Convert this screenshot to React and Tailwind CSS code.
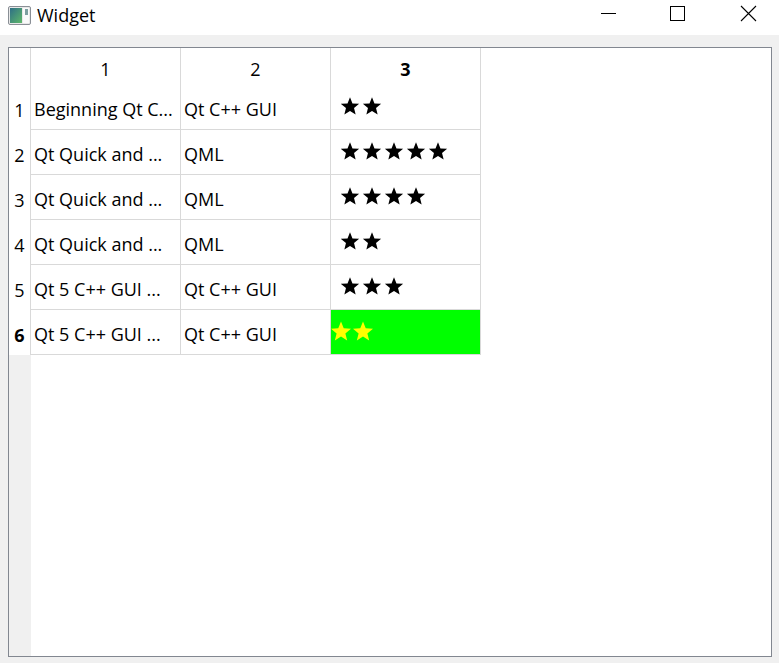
import React from "react";

const rows = [
  { t: "Beginning Qt C...", g: "Qt C++ GUI", s: 2 },
  { t: "Qt Quick and ...", g: "QML", s: 5 },
  { t: "Qt Quick and ...", g: "QML", s: 4 },
  { t: "Qt Quick and ...", g: "QML", s: 2 },
  { t: "Qt 5 C++ GUI ...", g: "Qt C++ GUI", s: 3 },
  { t: "Qt 5 C++ GUI ...", g: "Qt C++ GUI", s: 2, sel: true },
];

function starPoints(cx, cy, R) {
  const pts = [];
  for (let i = 0; i < 10; i++) {
    const r = i % 2 === 0 ? R : R * 0.44;
    const a = (-90 + i * 36) * (Math.PI / 180);
    pts.push(`${(cx + r * Math.cos(a)).toFixed(2)},${(cy + r * Math.sin(a)).toFixed(2)}`);
  }
  return pts.join(" ");
}

function Stars({ n, big, color }) {
  const pitch = 22;
  const R = big ? 10.5 : 9.6;
  const w = n * pitch;
  const h = big ? 20 : 18;
  const cy = big ? R + 0.5 : R + 0.2;
  return (
    <svg width={w} height={h} viewBox={`0 0 ${w} ${h}`} className="block">
      {Array.from({ length: n }).map((_, i) => (
        <polygon key={i} points={starPoints(i * pitch + (big ? 10 : 9), cy, R)} fill={color} />
      ))}
    </svg>
  );
}

export default function App() {
  return (
    <div
      className="w-[779px] h-[663px] flex flex-col bg-[#f0f0f0] text-black overflow-hidden"
      style={{ fontFamily: '"Open Sans", "Noto Sans", sans-serif' }}
    >
      {/* Title bar */}
      <div className="h-[35px] bg-white flex items-center relative shrink-0">
        <svg width="23" height="19" viewBox="0 0 23 19" className="ml-[8px] mt-[-4px]">
          <defs>
            <linearGradient id="ig" x1="0" y1="0" x2="1" y2="1">
              <stop offset="0" stopColor="#2e6f86" />
              <stop offset="1" stopColor="#5fb86a" />
            </linearGradient>
          </defs>
          <rect x="0.5" y="0.5" width="22" height="18" rx="1.5" fill="#e8e8e8" stroke="#8a8f96" />
          <rect x="2" y="2" width="12" height="15" fill="url(#ig)" />
          <rect x="15" y="2" width="6" height="15" fill="#fafafa" />
          <rect x="17" y="3" width="3" height="6" fill="#7d9ea0" />
        </svg>
        <span className="ml-[6px] text-[18px] leading-none mt-[-5px]">Widget</span>
        {/* caption buttons */}
        <div className="absolute left-[601px] top-[13px] w-[15px] h-px bg-black" />
        <div className="absolute left-[670px] top-[6px] w-[15px] h-[15px] border border-black" />
        <svg className="absolute left-[740px] top-[5px]" width="17" height="17" viewBox="0 0 17 17">
          <path d="M1 1 L16 16 M16 1 L1 16" stroke="#000" strokeWidth="1.1" />
        </svg>
      </div>

      {/* Body */}
      <div className="flex-1 flex pl-[8px] pt-[12px] pr-[7px] pb-[6px]">
        <div className="flex-1 border border-[#828790] bg-white flex flex-col text-[18px]">
          {/* horizontal header */}
          <div className="h-[37px] flex shrink-0">
            <div className="w-[22px] border-r border-[#d9d9d9]" />
            {["1", "2", "3"].map((h, i) => (
              <div
                key={h}
                className={`w-[150px] border-r border-[#d9d9d9] flex items-center justify-center pt-[5px] ${i === 2 ? "font-bold" : ""}`}
              >
                {h}
              </div>
            ))}
            <div className="flex-1" />
          </div>
          {rows.map((r, i) => (
            <div key={i} className="h-[45px] flex shrink-0">
              <div
                className={`w-[22px] border-r border-[#d9d9d9] flex items-center justify-center pt-[5px] ${r.sel ? "font-bold" : ""}`}
              >
                {i + 1}
              </div>
              <div className="w-[150px] border-r border-b border-[#d9d9d9] flex items-center px-[3px] pt-[5px] whitespace-nowrap overflow-hidden">
                {r.t}
              </div>
              <div className="w-[150px] border-r border-b border-[#d9d9d9] flex items-center px-[3px] pt-[5px] whitespace-nowrap overflow-hidden">
                {r.g}
              </div>
              {r.sel ? (
                <div className="w-[150px] border-r border-b border-[#d9d9d9] bg-[#00ff00] flex items-center pb-[3px]">
                  <Stars n={r.s} big color="#ffff00" />
                </div>
              ) : (
                <div className="w-[150px] border-r border-b border-[#d9d9d9] flex items-center pl-[10px] pb-[2px]">
                  <Stars n={r.s} color="#000" />
                </div>
              )}
              <div className="flex-1" />
            </div>
          ))}
          <div className="flex-1 flex">
            <div className="w-[22px] bg-[#f0f0f0]" />
            <div className="flex-1" />
          </div>
        </div>
      </div>
    </div>
  );
}
